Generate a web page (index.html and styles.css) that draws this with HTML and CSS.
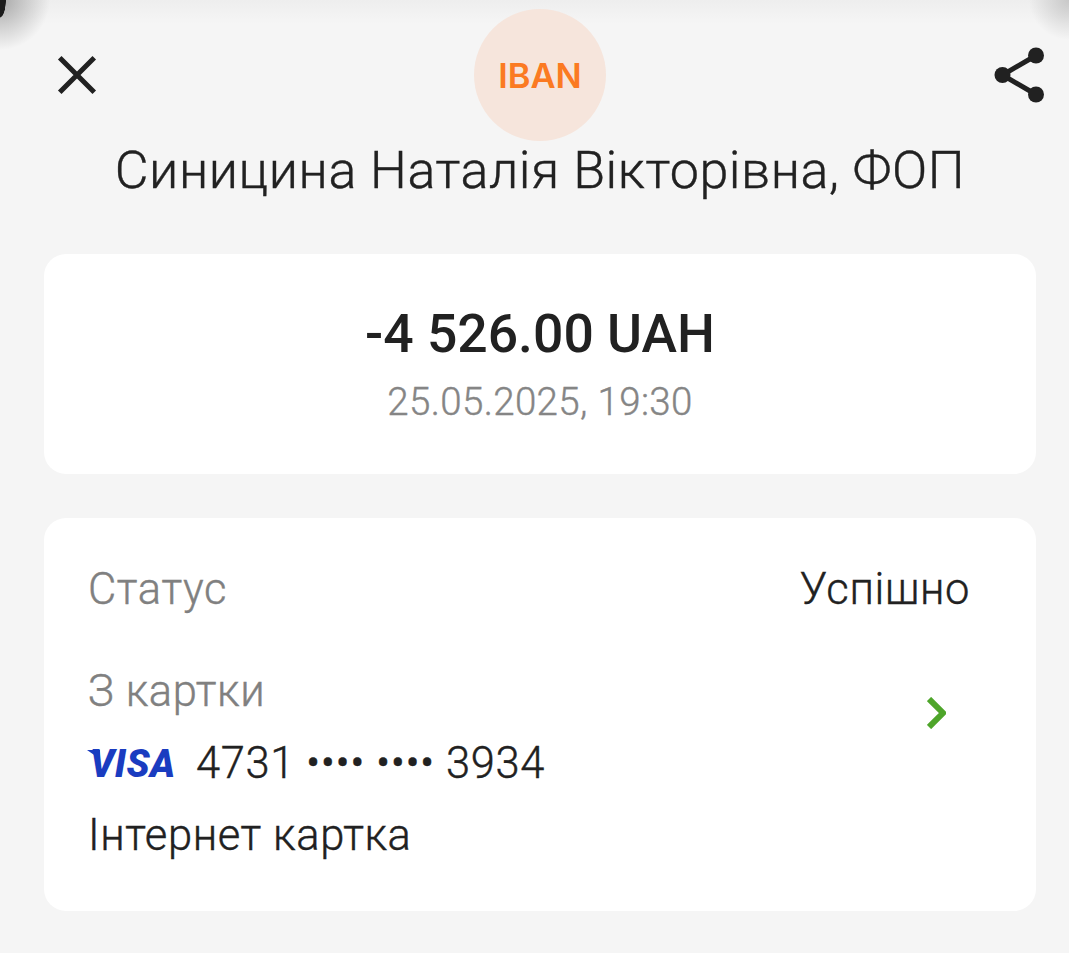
FILE: index.html
```html
<!DOCTYPE html>
<html lang="uk">
<head>
<meta charset="utf-8">
<title>Деталі платежу</title>
<link rel="stylesheet" href="styles.css">
</head>
<body>
<div class="corner corner-left"></div>
<div class="corner corner-right"></div>
<main class="screen">
  <header class="top">
    <svg class="icon-close" viewBox="0 0 40 40" aria-hidden="true"><path d="M4.500 4.500L35.500 35.500M35.500 4.500L4.500 35.500"/></svg>
    <div class="avatar">IBAN</div>
    <svg class="icon-share" viewBox="0 0 52 58" aria-hidden="true"><path class="share-line" d="M42 9.500L8.500 29L42 48.500"/><circle cx="42" cy="9.500" r="8"/><circle cx="8.500" cy="29" r="8"/><circle cx="42" cy="48.500" r="8"/></svg>
  </header>
  <h1 class="name">Синицина Наталія Вікторівна, ФОП</h1>
  <section class="card summary">
    <div class="amount">-4 526.00 UAH</div>
    <div class="date">25.05.2025, 19:30</div>
  </section>
  <section class="card details">
    <div class="row">
      <span class="muted">Статус</span>
      <span>Успішно</span>
    </div>
    <div class="source">
      <div class="source-info">
        <div class="muted">З картки</div>
        <div class="card-number">
          <span class="visa">VISA</span>
          <span>4731 •••• •••• 3934</span>
        </div>
        <div>Інтернет картка</div>
      </div>
      <svg class="chevron" viewBox="0 0 19 32" aria-hidden="true"><path d="M2 2L16 16L2 30"/></svg>
    </div>
  </section>
</main>
</body>
</html>
```

FILE: styles.css
```css
* { box-sizing: border-box; }
html, body { margin: 0; height: 100%; }
body {
  background: linear-gradient(#eeeeee 0, #f5f5f5 24px);
  color: #212121;
  font-family: Roboto, "Liberation Sans", sans-serif;
  overflow: hidden;
  position: relative;
}
.corner {
  position: absolute;
  top: 0;
  width: 60px;
  height: 60px;
}
.corner-left {
  left: 0;
  background:
    radial-gradient(ellipse 6px 18px at 0 0, #1c1c1c 92%, transparent 100%),
    radial-gradient(circle at 0 0, #a8a8a8 0, rgba(245, 245, 245, 0) 50px);
}
.corner-right {
  right: 0;
  background: radial-gradient(circle at 100% 0, #c8c8c8 0, rgba(245, 245, 245, 0) 40px);
}
.screen {
  position: relative;
  padding: 9px 33px 0 44px;
}
.top {
  display: grid;
  grid-template-columns: 1fr auto 1fr;
  align-items: center;
}
.icon-close { width: 40px; height: 40px; margin-left: 13px; }
.icon-close path { fill: none; stroke: #212121; stroke-width: 5; stroke-linecap: square; }
.avatar {
  width: 132px;
  height: 132px;
  border-radius: 50%;
  background: #f6e5dc;
  color: #fb7a22;
  font-family: Inter, Roboto, sans-serif;
  font-size: 34.500px;
  font-weight: 600;
  display: flex;
  align-items: center;
  justify-content: center;
}
.icon-share { width: 52px; height: 58px; fill: #212121; justify-self: end; margin-right: -10px; }
.share-line { fill: none; stroke: #212121; stroke-width: 5; }
.name {
  margin: 0 0 54px;
  font-size: 52px;
  line-height: 59px;
  font-weight: 300;
  letter-spacing: 0.58px;
  -webkit-text-stroke: 0.4px currentColor;
  text-align: center;
  white-space: nowrap;
}
.card {
  width: 992px;
  background: #fff;
  border-radius: 22px;
}
.summary {
  height: 220px;
  margin-bottom: 44px;
  padding-top: 50px;
  text-align: center;
}
.amount {
  font-size: 53.500px;
  line-height: 60px;
  font-weight: 500;
}
.date {
  margin-top: 15px;
  font-size: 38.500px;
  line-height: 45px;
  font-weight: 300;
  letter-spacing: 0.35px;
  -webkit-text-stroke: 0.4px currentColor;
  color: #858585;
}
.details {
  height: 393px;
  padding: 48px 66px 0 44px;
  font-size: 43.500px;
  line-height: 48px;
  font-weight: 300;
  letter-spacing: 0.6px;
  -webkit-text-stroke: 0.4px currentColor;
}
.row {
  display: flex;
  justify-content: space-between;
}
.muted { color: #808080; }
.source {
  display: flex;
  align-items: flex-start;
  justify-content: space-between;
  margin-top: 54px;
  padding-right: 24px;
}
.source-info { display: flex; flex-direction: column; gap: 24px; }
.card-number {
  display: flex;
  align-items: center;
  gap: 22px;
}
.visa {
  position: relative;
  width: 86px;
  padding-left: 2px;
  color: #1a3cc0;
  font-size: 38px;
  font-style: italic;
  font-weight: 900;
  letter-spacing: 0.5px;
  -webkit-text-stroke: 0;
}
.visa::before {
  content: "";
  position: absolute;
  left: -1px;
  top: 10px;
  width: 13px;
  height: 9px;
  background: #1a3cc0;
  clip-path: polygon(0 0, 100% 0, 100% 100%);
}
.chevron { width: 19px; height: 32px; margin-top: 29px; }
.chevron path { fill: none; stroke: #4ea52a; stroke-width: 6; }
```
